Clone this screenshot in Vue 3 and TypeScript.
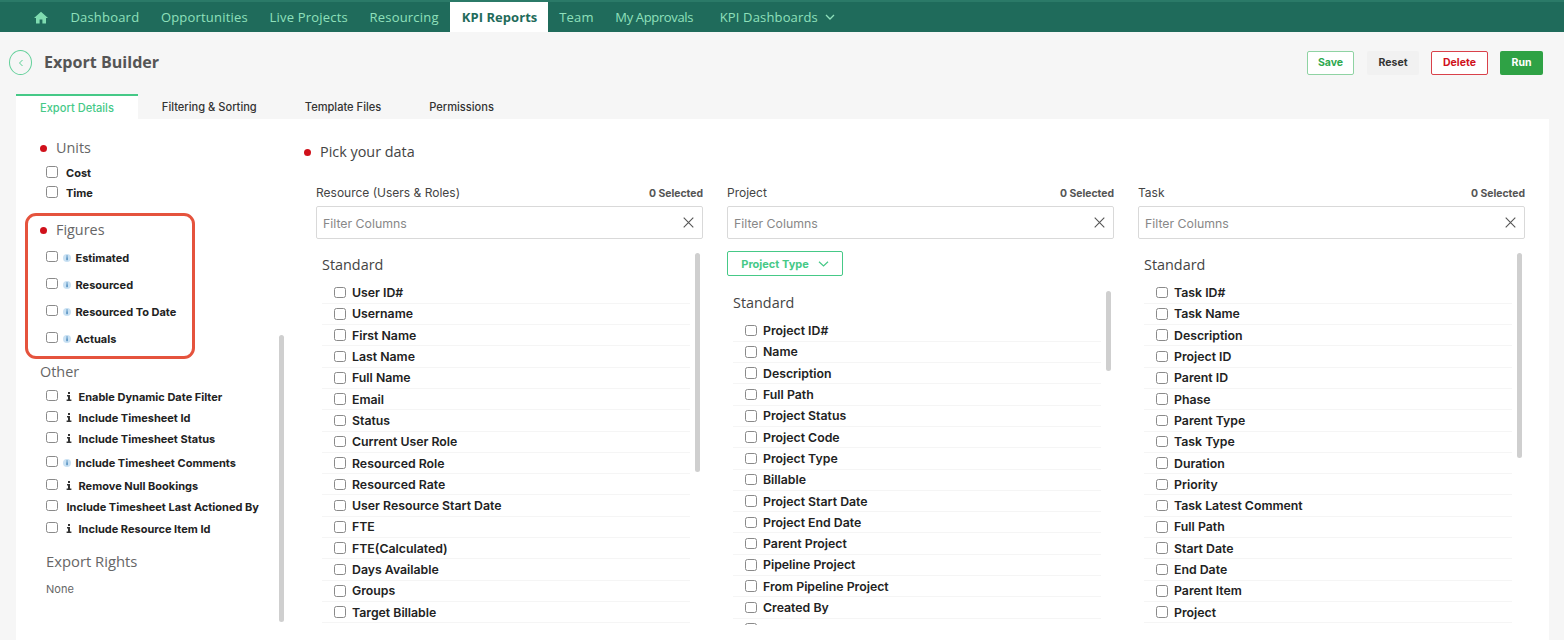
<script setup lang="ts">
type Opt = { label: string; icon?: 'blue' | 'dark'; cls?: string }
const nav = ['Dashboard', 'Opportunities', 'Live Projects', 'Resourcing', 'KPI Reports', 'Team', 'My Approvals']
const tabs = ['Export Details', 'Filtering & Sorting', 'Template Files', 'Permissions']
const units: Opt[] = [{ label: 'Cost' }, { label: 'Time' }]
const figures: Opt[] = ['Estimated', 'Resourced', 'Resourced To Date', 'Actuals'].map((label) => ({ label, icon: 'blue' }))
const other: Opt[] = [
  { label: 'Enable Dynamic Date Filter', icon: 'dark' },
  { label: 'Include Timesheet Id', icon: 'dark' },
  { label: 'Include Timesheet Status', icon: 'dark' },
  { label: 'Include Timesheet Comments', icon: 'blue', cls: 'cmt' },
  { label: 'Remove Null Bookings', icon: 'dark' },
  { label: 'Include Timesheet Last Actioned By' },
  { label: 'Include Resource Item Id', icon: 'dark', cls: 'last' },
]
const columns = [
  {
    title: 'Resource (Users & Roles)',
    filter: false,
    barClass: 'bar-a',
    items: ['User ID#', 'Username', 'First Name', 'Last Name', 'Full Name', 'Email', 'Status', 'Current User Role', 'Resourced Role', 'Resourced Rate', 'User Resource Start Date', 'FTE', 'FTE(Calculated)', 'Days Available', 'Groups', 'Target Billable'],
  },
  {
    title: 'Project',
    filter: true,
    barClass: 'bar-b',
    items: ['Project ID#', 'Name', 'Description', 'Full Path', 'Project Status', 'Project Code', 'Project Type', 'Billable', 'Project Start Date', 'Project End Date', 'Parent Project', 'Pipeline Project', 'From Pipeline Project', 'Created By', ''],
  },
  {
    title: 'Task',
    filter: false,
    barClass: 'bar-c',
    items: ['Task ID#', 'Task Name', 'Description', 'Project ID', 'Parent ID', 'Phase', 'Parent Type', 'Task Type', 'Duration', 'Priority', 'Task Latest Comment', 'Full Path', 'Start Date', 'End Date', 'Parent Item', 'Project'],
  },
]
</script>

<template>
  <div class="page">
    <nav class="topnav">
      <svg class="home" width="14" height="13" viewBox="0 0 14 13"><path d="M7 .8 0 7h2v5.6h3.6V8.6h2.8v4H12V7h2z" fill="#7fdcb0" /></svg>
      <a v-for="n in nav" :key="n" class="navlink" :class="{ active: n === 'KPI Reports', tight: n === 'My Approvals' }">{{ n }}</a>
      <a class="navlink dash">KPI Dashboards
        <svg class="navchev" width="10" height="6" viewBox="0 0 10 6"><path d="M1 1l4 4 4-4" fill="none" stroke="#8fe0bb" stroke-width="1.3" /></svg>
      </a>
    </nav>

    <header class="head">
      <div class="head-left">
        <span class="back">
          <svg width="6" height="8" viewBox="0 0 6 8"><path d="M4.5 1 1.5 4l3 3" fill="none" stroke="#58cf93" stroke-width="1" /></svg>
        </span>
        <h1>Export Builder</h1>
      </div>
      <div class="actions">
        <button class="btn save">Save</button>
        <button class="btn reset">Reset</button>
        <button class="btn del">Delete</button>
        <button class="btn run">Run</button>
      </div>
    </header>

    <div class="tabs">
      <div v-for="(t, i) in tabs" :key="t" class="tab" :class="{ on: i === 0 }">{{ t }}</div>
    </div>

    <main class="panel">
      <aside class="side">
        <span class="side-bar"></span>
        <section class="units">
          <h3 class="sec"><i class="dot"></i>Units</h3>
          <label v-for="o in units" :key="o.label" class="opt plain"><input type="checkbox" /><b>{{ o.label }}</b></label>
        </section>
        <section class="figures">
          <h3 class="sec"><i class="dot"></i>Figures</h3>
          <label v-for="o in figures" :key="o.label" class="opt fig">
            <input type="checkbox" />
            <svg class="info" width="8" height="8" viewBox="0 0 8 8"><circle cx="4" cy="4" r="4" fill="#c9e1f3" /><rect x="3.4" y="3.2" width="1.3" height="3" fill="#3b7fb5" /><rect x="3.4" y="1.5" width="1.3" height="1.1" fill="#3b7fb5" /></svg>
            <b>{{ o.label }}</b>
          </label>
        </section>
        <section class="other">
          <h3 class="sec nodot">Other</h3>
          <label v-for="o in other" :key="o.label" class="opt oth" :class="o.cls">
            <input type="checkbox" />
            <svg v-if="o.icon === 'blue'" class="info" width="8" height="8" viewBox="0 0 8 8"><circle cx="4" cy="4" r="4" fill="#c9e1f3" /><rect x="3.4" y="3.2" width="1.3" height="3" fill="#3b7fb5" /><rect x="3.4" y="1.5" width="1.3" height="1.1" fill="#3b7fb5" /></svg>
            <svg v-else-if="o.icon === 'dark'" class="idark" width="6" height="9" viewBox="0 0 6 9"><path d="M1 3h3v4.6h1.4V9H.6V7.6H2V4.4H1zM2 0h2v2H2z" fill="#333" /></svg>
            <b :class="{ wide: !o.icon }">{{ o.label }}</b>
          </label>
        </section>
        <section class="rights">
          <h3>Export Rights</h3>
          <p>None</p>
        </section>
      </aside>

      <div class="data">
        <h3 class="sec pick"><i class="dot"></i>Pick your data</h3>
        <div class="cols">
          <div v-for="c in columns" :key="c.title" class="col">
            <div class="col-head"><span>{{ c.title }}</span><em>0 Selected</em></div>
            <div class="search">
              <span class="ph">Filter Columns</span>
              <svg width="11" height="11" viewBox="0 0 11 11"><path d="M.7.7l9.6 9.6M10.3.7.7 10.3" stroke="#555" stroke-width="1.1" fill="none" /></svg>
            </div>
            <button v-if="c.filter" class="ptype">Project Type
              <svg width="11" height="6" viewBox="0 0 11 6"><path d="M1 .8l4.5 4.2L10 .8" fill="none" stroke="#46c987" stroke-width="1.2" /></svg>
            </button>
            <div class="list" :class="{ short: c.filter }">
              <span class="bar" :class="c.barClass"></span>
              <h4>Standard</h4>
              <label v-for="it in c.items" :key="it" class="row"><input type="checkbox" /><b v-if="it">{{ it }}</b></label>
            </div>
          </div>
        </div>
      </div>
    </main>
  </div>
</template>

<style>
html, body { margin: 0; background: #f6f6f6; overflow: hidden; }
</style>

<style scoped>
.page { width: 1564px; height: 640px; overflow: hidden; background: #f6f6f6; font-family: Inter, "Liberation Sans", sans-serif; color: #222; }
.topnav { height: 30px; border-top: 2px solid #2b7a68; background: #1f6b5b; display: flex; align-items: center; padding-left: 34px; font-family: "Open Sans", sans-serif; }
.home { margin-right: 11.6px; }
.navlink { height: 30px; line-height: 30px; padding: 0 10.8px; font-size: 13px; font-weight: 500; color: #8fe0bb; white-space: nowrap; display: flex; align-items: center; letter-spacing: .2px; }
.navlink.active { background: #fff; color: #1f6b5b; font-weight: 700; padding: 0 11px 0 11.5px; margin-left: .8px; letter-spacing: .05px; }
.navlink.tight { letter-spacing: -.35px; }
.navlink.dash { margin-left: 5px; letter-spacing: .15px; }
.navchev { margin-left: 7px; }
.head { display: flex; justify-content: space-between; align-items: center; padding: 18px 21px 0 9px; height: 25px; }
.head-left { display: flex; align-items: center; gap: 12px; }
.back { width: 21px; height: 23px; border: 1px solid #63d09a; border-radius: 50%; display: flex; align-items: center; justify-content: center; }
h1 { margin: 0 0 2px; font-size: 16.1px; font-weight: 700; color: #555; font-family: "Open Sans", sans-serif; line-height: 20px; }
.actions { display: flex; gap: 12px; }
.btn { height: 24px; padding: 0; border-radius: 2px; font: 700 10.5px Inter, sans-serif; border: 1px solid transparent; }
.save { width: 47px; margin-right: 1px; background: #fff; color: #2fa84f; border-color: #8fd3a3; }
.reset { width: 52px; background: #f1f1f1; color: #333; }
.del { width: 57px; background: #fff; color: #d0111b; border-color: #d9414a; }
.run { width: 43px; background: #2fa245; color: #fff; }
.tabs { display: flex; margin: 19px 0 0 16px; height: 25px; }
.tab { padding: 0 24px; font-size: 11.1px; font-weight: 500; color: #333; line-height: 26px; }
.tab.on { border-top: 2px solid #46c987; background: #fff; color: #46c987; line-height: 24px; }
.panel { margin: 0 15px 0 16px; height: 521px; background: #fff; display: flex; overflow: hidden; }
.side { width: 272px; flex: none; padding-top: 20px; position: relative; }
.side-bar { position: absolute; left: 263px; top: 216px; width: 5px; height: 287px; border-radius: 3px; background: #cfcfcf; }
.sec { margin: 0; font-size: 14.4px; font-weight: 500; color: #666; font-family: "Open Sans", sans-serif; line-height: 18px; display: flex; align-items: center; }
.dot { width: 7px; height: 7px; border-radius: 50%; background: #d0111b; margin-right: 9px; margin-left: 24px; flex: none; }
.opt { display: flex; align-items: center; }
.opt input, .row input { appearance: none; margin: 0; width: 11.5px; height: 11.5px; border: 1px solid #8a8a8a; border-radius: 2.5px; background: #fff; flex: none; box-sizing: border-box; }
.opt input { margin-top: -2px; }
.opt b, .row b { font-size: 11px; font-weight: 700; color: #222; white-space: nowrap; }
.plain { height: 20px; margin-left: 30px; }
.units .sec { margin-bottom: 6px; }
.plain b { margin-left: 8.5px; }
.figures { width: 164px; margin: 10px 0 0 9px; border: 3px solid #e5533d; border-radius: 11px; padding-top: 5px; box-sizing: content-box; height: 135px; }
.figures .sec { margin-bottom: 5px; }
.figures .dot { margin-left: 12px; }
.fig { height: 27px; margin-left: 18px; }
.info { margin: 0 5px 0 5px; flex: none; }
.other { margin: 4px 0 0 24px; }
.nodot { margin-bottom: 5px; }
.oth { height: 21px; margin-left: 6px; }
.oth.cmt { margin-top: 3px; margin-bottom: 2px; }
.oth.last { margin-top: 1px; }
.idark { margin: 0 7px 0 8px; flex: none; }
.wide { margin-left: 9px; }
.rights { margin: 13px 0 0 30px; }
.rights h3 { margin: 0 0 12px; font-size: 14.8px; font-weight: 500; color: #666; font-family: "Open Sans", sans-serif; line-height: 18px; }
.rights p { margin: 0; font-size: 11px; color: #666; }
.data { flex: 1; padding-top: 24px; min-width: 0; }
.pick { color: #444; }
.pick .dot { margin-left: 16px; }
.cols { display: grid; grid-template-columns: repeat(3, 387px); gap: 24px; margin: 24px 0 0 28px; }
.col { height: 440px; display: flex; flex-direction: column; overflow: hidden; }
.col-head { display: flex; justify-content: space-between; align-items: baseline; height: 21px; font-size: 12px; color: #444; }
.col-head em { font-style: normal; font-weight: 700; font-size: 10.4px; color: #555; }
.search { height: 31px; flex: none; border: 1px solid #d9d9d9; border-radius: 2px; display: flex; align-items: center; justify-content: space-between; padding: 0 8px 0 6px; font-size: 12.3px; color: #888; }
.ph { margin-top: 2px; }
.ptype { align-self: flex-start; margin-top: 12px; width: 116px; height: 25px; flex: none; background: #fff; border: 1px solid #46c987; border-radius: 2px; color: #46c987; font: 700 11px Inter, sans-serif; display: flex; align-items: center; justify-content: center; gap: 9px; padding: 0; }
.list { position: relative; padding: 17px 13px 0 6px; flex: 1; overflow: hidden; }
.list.short { padding-top: 18px; }
.list h4 { margin: 0 0 8.5px; font-size: 14.4px; font-weight: 500; color: #444; font-family: "Open Sans", sans-serif; line-height: 18px; }
.row { display: flex; align-items: center; height: 20.3px; border-bottom: 1px solid #f5f5f5; padding-left: 12px; }
.row b { margin-left: 6.5px; font-size: 12.3px; font-weight: 600; }
.bar { position: absolute; right: 3px; width: 5px; border-radius: 3px; background: #cfcfcf; top: 14px; }
.bar-a { height: 219px; }
.bar-b { height: 80px; top: 15px; }
.bar-c { height: 205px; }
</style>
